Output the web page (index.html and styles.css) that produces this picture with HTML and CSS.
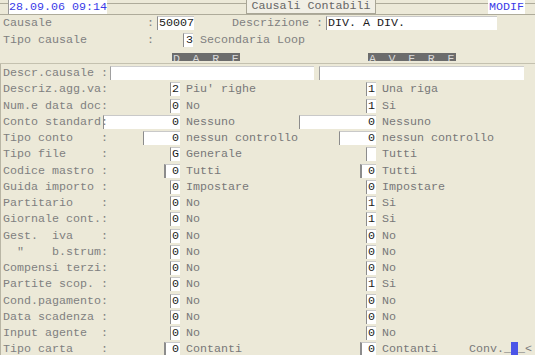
FILE: index.html
```html
<!DOCTYPE html>
<html lang="it">
<head>
    <meta charset="UTF-8">
    <title>Causali Contabili</title>
    <link rel="stylesheet" href="styles.css">
</head>
<body>
    <!-- barra superiore -->
    <div class="topbar">
        <span class="date">28.09.06 09:14</span>
        <span class="title">Causali Contabili</span>
        <span class="mode">MODIF</span>
    </div>

    <!-- testata -->
    <div class="head-row">
        <span class="hlabel">Causale</span><span class="colon">:</span>
        <span class="box code">50007</span>
        <span class="dlabel">Descrizione :</span>
        <span class="box desc">DIV. A DIV.</span>
    </div>
    <div class="head-row second">
        <span class="hlabel">Tipo causale</span><span class="colon">:</span>
        <span class="box tipo">3</span>
        <span class="htext">Secondaria Loop</span>
    </div>
    <div class="sides">
        <span class="side dare">DARE</span>
        <span class="side avere">AVERE</span>
    </div>

    <!-- righe dare / avere -->
    <div class="form">
        <div class="row">
            <span class="lbl wide">Descr.causale :</span>
            <span class="field first"></span>
            <span class="field"></span>
        </div>
        <div class="row">
            <div class="dare-col"><span class="lbl">Descriz.agg.va:</span><span class="val">2</span></div>
            <div class="mid-col"><span class="txt">Piu' righe</span><span class="val">1</span></div>
            <span class="txt right">Una riga</span>
        </div>
        <div class="row">
            <div class="dare-col"><span class="lbl">Num.e data doc:</span><span class="val">0</span></div>
            <div class="mid-col"><span class="txt">No</span><span class="val">1</span></div>
            <span class="txt right">Si</span>
        </div>
        <div class="row">
            <div class="dare-col"><span class="lbl">Conto standard:</span><span class="val w77">0</span></div>
            <div class="mid-col"><span class="txt">Nessuno</span><span class="val w77">0</span></div>
            <span class="txt right">Nessuno</span>
        </div>
        <div class="row">
            <div class="dare-col"><span class="lbl">Tipo conto    :</span><span class="val w37">0</span></div>
            <div class="mid-col"><span class="txt">nessun controllo</span><span class="val w37">0</span></div>
            <span class="txt right">nessun controllo</span>
        </div>
        <div class="row">
            <div class="dare-col"><span class="lbl">Tipo file     :</span><span class="val">G</span></div>
            <div class="mid-col"><span class="txt">Generale</span><span class="val"></span></div>
            <span class="txt right">Tutti</span>
        </div>
        <div class="row">
            <div class="dare-col"><span class="lbl">Codice mastro :</span><span class="val w16">0</span></div>
            <div class="mid-col"><span class="txt">Tutti</span><span class="val w16">0</span></div>
            <span class="txt right">Tutti</span>
        </div>
        <div class="row">
            <div class="dare-col"><span class="lbl">Guida importo :</span><span class="val">0</span></div>
            <div class="mid-col"><span class="txt">Impostare</span><span class="val">0</span></div>
            <span class="txt right">Impostare</span>
        </div>
        <div class="row">
            <div class="dare-col"><span class="lbl">Partitario    :</span><span class="val">0</span></div>
            <div class="mid-col"><span class="txt">No</span><span class="val">1</span></div>
            <span class="txt right">Si</span>
        </div>
        <div class="row">
            <div class="dare-col"><span class="lbl">Giornale cont.:</span><span class="val">0</span></div>
            <div class="mid-col"><span class="txt">No</span><span class="val">1</span></div>
            <span class="txt right">Si</span>
        </div>
        <div class="row">
            <div class="dare-col"><span class="lbl">Gest.  iva    :</span><span class="val">0</span></div>
            <div class="mid-col"><span class="txt">No</span><span class="val">0</span></div>
            <span class="txt right">No</span>
        </div>
        <div class="row">
            <div class="dare-col"><span class="lbl">  "    b.strum:</span><span class="val">0</span></div>
            <div class="mid-col"><span class="txt">No</span><span class="val">0</span></div>
            <span class="txt right">No</span>
        </div>
        <div class="row">
            <div class="dare-col"><span class="lbl">Compensi terzi:</span><span class="val">0</span></div>
            <div class="mid-col"><span class="txt">No</span><span class="val">0</span></div>
            <span class="txt right">No</span>
        </div>
        <div class="row">
            <div class="dare-col"><span class="lbl">Partite scop. :</span><span class="val">0</span></div>
            <div class="mid-col"><span class="txt">No</span><span class="val">1</span></div>
            <span class="txt right">Si</span>
        </div>
        <div class="row">
            <div class="dare-col"><span class="lbl">Cond.pagamento:</span><span class="val">0</span></div>
            <div class="mid-col"><span class="txt">No</span><span class="val">0</span></div>
            <span class="txt right">No</span>
        </div>
        <div class="row">
            <div class="dare-col"><span class="lbl">Data scadenza :</span><span class="val">0</span></div>
            <div class="mid-col"><span class="txt">No</span><span class="val">0</span></div>
            <span class="txt right">No</span>
        </div>
        <div class="row">
            <div class="dare-col"><span class="lbl">Input agente  :</span><span class="val">0</span></div>
            <div class="mid-col"><span class="txt">No</span><span class="val">0</span></div>
            <span class="txt right">No</span>
        </div>
        <div class="row">
            <div class="dare-col"><span class="lbl">Tipo carta    :</span><span class="val w16">0</span></div>
            <div class="mid-col"><span class="txt">Contanti</span><span class="val w16">0</span></div>
            <span class="txt right">Contanti</span>
            <span class="conv">Conv.<span class="us">_</span><span class="cursor"></span>_&lt;</span>
        </div>
    </div>
</body>
</html>
```

FILE: styles.css
```css
body {
    margin: 0;
    background-color: #ece9d8;
    font-family: "Liberation Mono", "DejaVu Sans Mono", monospace;
    font-size: 11.67px;
    color: #808080;
    overflow: hidden;
}

/* barra superiore */
.topbar {
    display: flex;
    height: 14px;
    border-bottom: 1px solid #aeab9a;
    background: linear-gradient(#ece9d8 3px, #aeab9a 3px, #aeab9a 4px, #ece9d8 4px);
    line-height: 14px;
    white-space: nowrap;
}

.date {
    margin-left: 8px;
    width: 98px;
    background-color: #fff;
    border-left: 1px solid #9a9a9a;
    color: #3a3ae8;
}

.title {
    margin-left: 139px;
    width: 128px;
    height: 13px;
    line-height: 13px;
    text-align: center;
    background-color: #f1efe5;
    border: 1px solid #a9a696;
    border-top: none;
    color: #666;
}

.mode {
    margin-left: auto;
    margin-right: 10px;
    width: 36px;
    padding-left: 1px;
    background-color: #fff;
    color: #3a3ae8;
}

/* testata */
.head-row {
    display: flex;
    align-items: center;
    height: 16px;
    white-space: pre;
}

.head-row.second {
    height: 17px;
}

.hlabel {
    width: 144px;
    padding-left: 3px;
}

.colon {
    width: 10px;
}

.box {
    box-sizing: border-box;
    height: 14px;
    line-height: 13px;
    background-color: #fff;
    border-left: 1px solid #8c8c8c;
    border-top: 1px solid #c9c9c9;
    color: #1a1a1a;
}

.box.code {
    width: 37px;
    padding-left: 1px;
}

.box.desc {
    width: 171px;
    padding-left: 1px;
}

.box.tipo {
    margin-left: 26px;
    width: 10px;
    text-align: right;
}

.dlabel {
    margin-left: 38px;
    width: 94px;
}

.htext {
    margin-left: 7px;
}

.sides {
    position: relative;
    height: 15px;
    border-bottom: 1px solid #c4c1af;
}

.side {
    position: absolute;
    top: 5px;
    height: 8px;
    overflow: hidden;
    background-color: #6c6c6c;
    color: #d8d8d8;
    line-height: 13px;
    letter-spacing: 12.6px;
    text-indent: 1px;
    white-space: nowrap;
}

.side.dare {
    left: 172px;
    width: 68px;
}

.side.avere {
    left: 368px;
    width: 88px;
}

/* righe */
.form {
    padding-top: 1px;
    border-left: 1px solid #b9b6a5;
}

.row {
    display: flex;
    align-items: center;
    height: 16.25px;
    white-space: pre;
}

.lbl {
    position: relative;
    z-index: 1;
    padding-left: 2px;
}

.lbl.wide {
    width: 107px;
}

.field {
    box-sizing: border-box;
    width: 205px;
    height: 14px;
    background-color: #fff;
    border-left: 1px solid #a0a0a0;
    border-top: 1px solid #cfcfcf;
}

.field.first {
    width: 204px;
    margin-right: 5px;
}

.dare-col,
.mid-col {
    display: grid;
    align-items: center;
}

.dare-col {
    width: 179px;
}

.mid-col {
    width: 196px;
}

.dare-col > span,
.mid-col > span {
    grid-area: 1 / 1;
}

.val {
    justify-self: end;
    box-sizing: border-box;
    width: 10px;
    height: 14px;
    line-height: 13px;
    padding-right: 1px;
    text-align: right;
    background-color: #fff;
    border-left: 1px solid #8c8c8c;
    border-top: 1px solid #c9c9c9;
    color: #1a1a1a;
}

.val.w77 {
    width: 77px;
}

.val.w37 {
    width: 37px;
}

.val.w16 {
    width: 16px;
    border-left-width: 2px;
}

.txt {
    justify-self: start;
    padding-left: 6px;
    color: #787878;
}

.conv {
    margin-left: auto;
    margin-right: 3px;
    display: flex;
    align-items: flex-end;
    color: #7a7a7a;
}

.cursor {
    display: inline-block;
    width: 7px;
    height: 14px;
    background-color: #4b55e8;
}
```
